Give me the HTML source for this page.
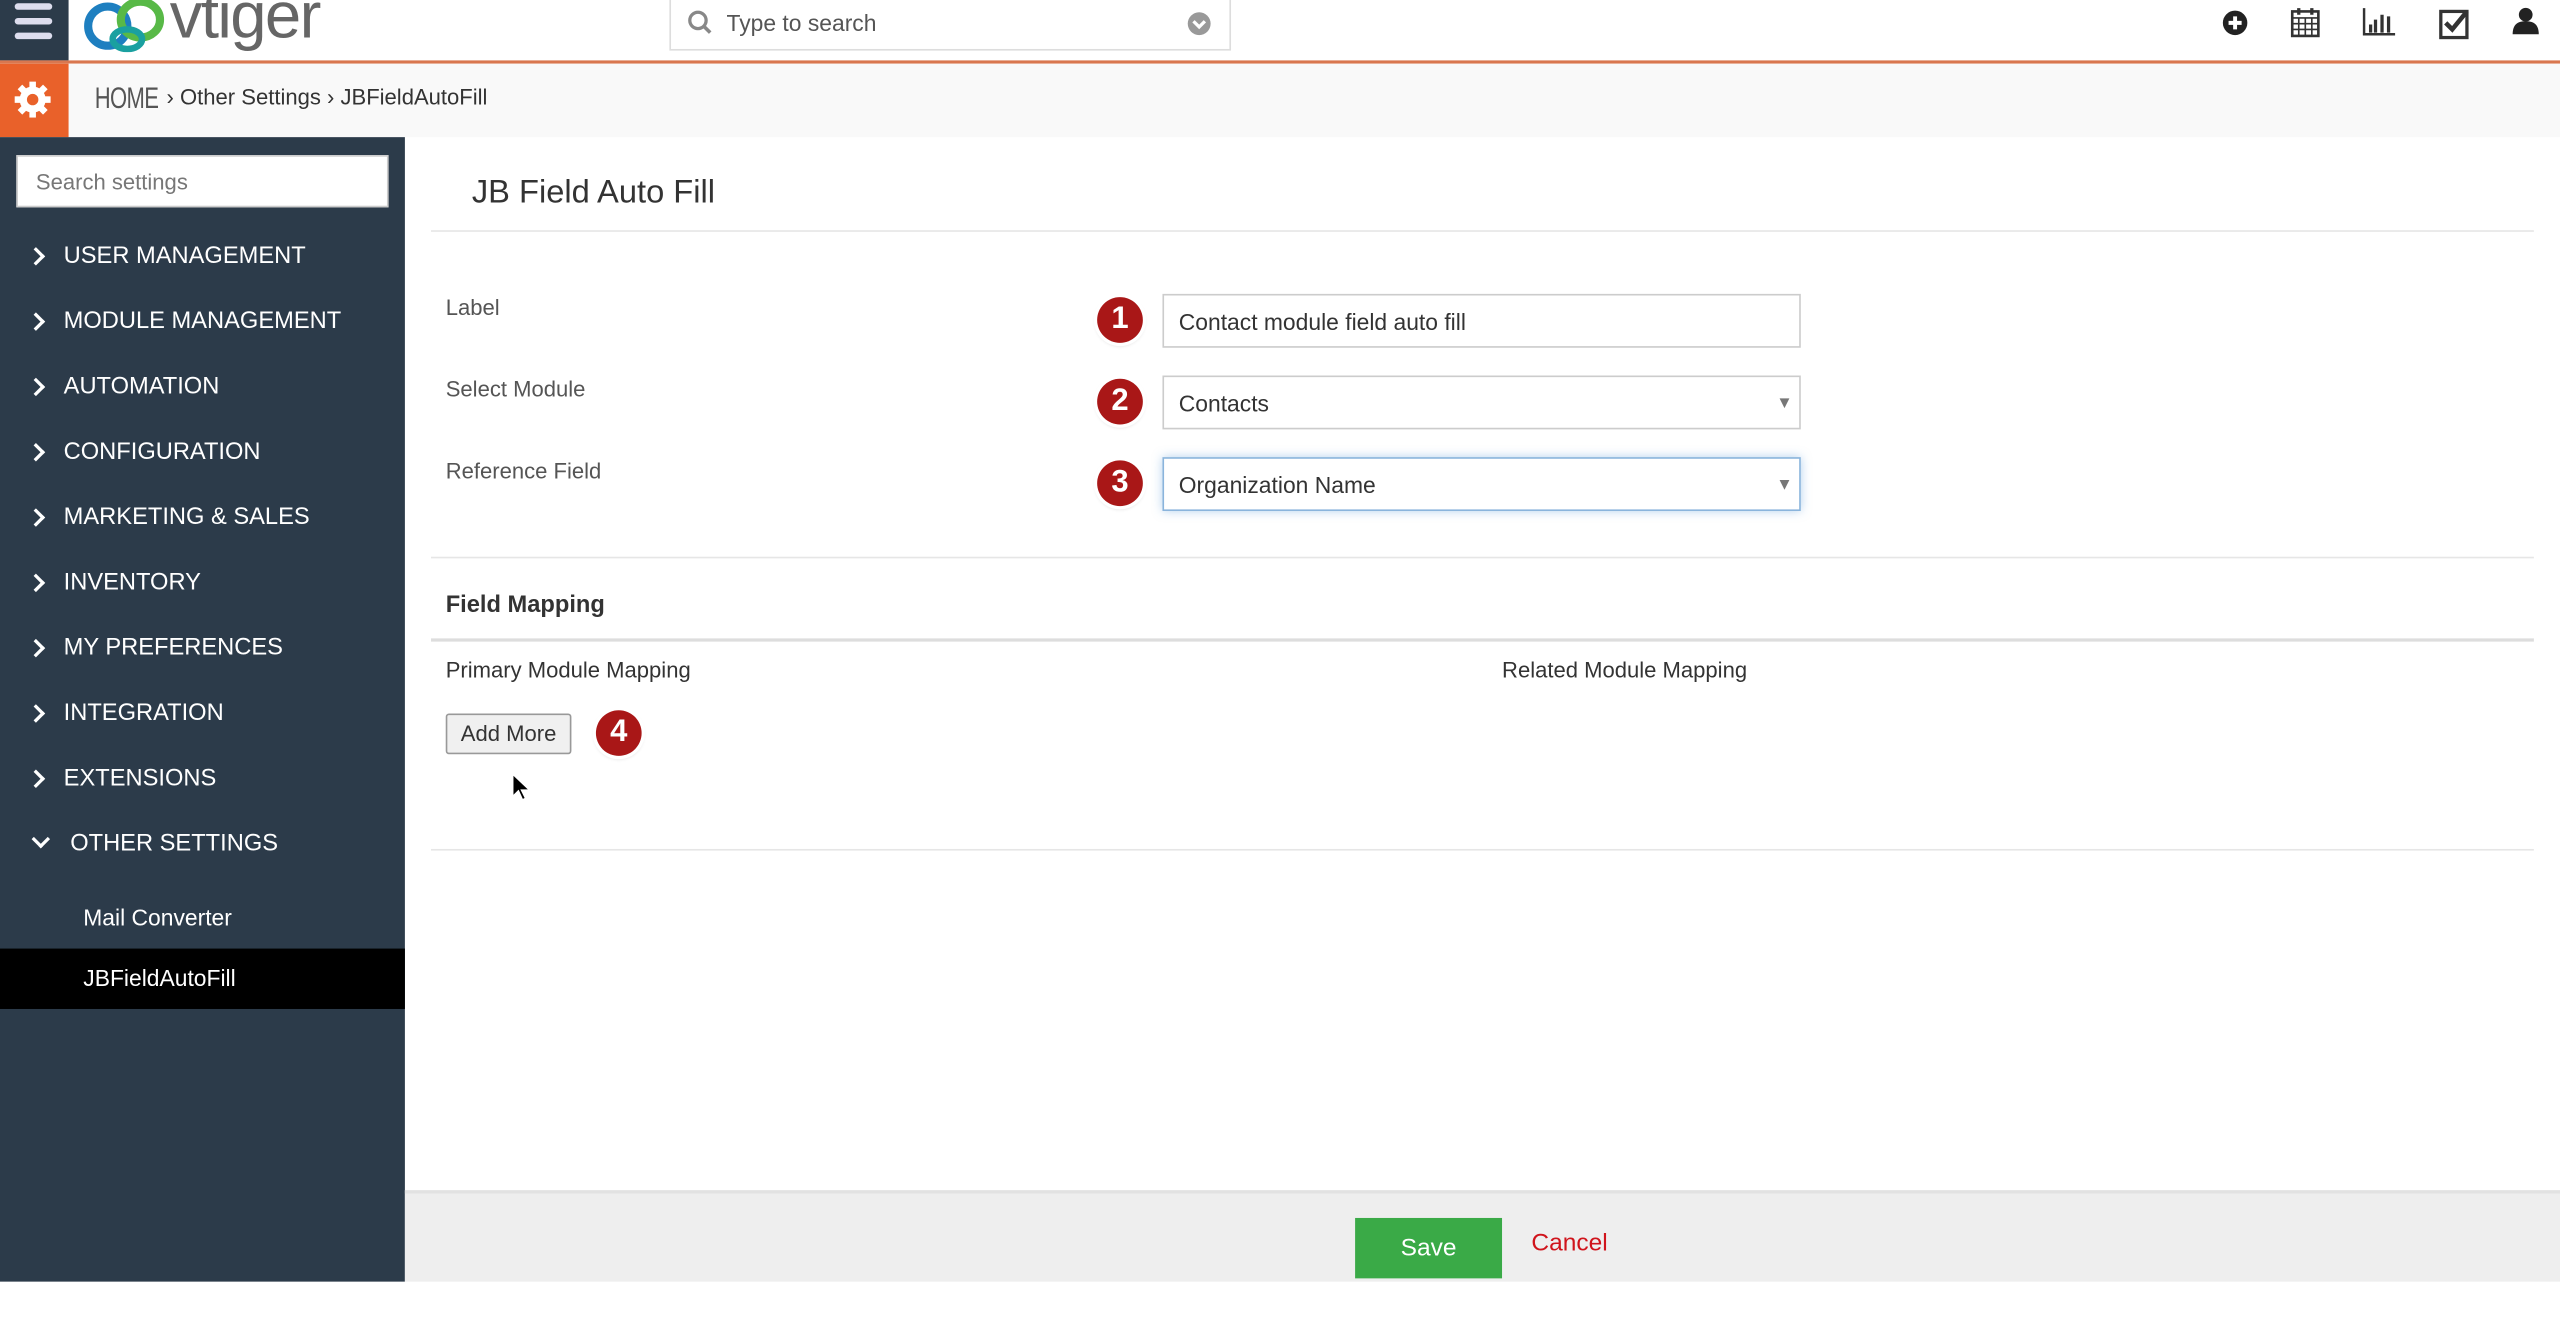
<!DOCTYPE html>
<html><head><meta charset="utf-8"><style>
*{box-sizing:border-box;margin:0;padding:0}
html,body{width:2560px;height:1328px;overflow:hidden;background:#fff}
#w{width:1568px;height:814px;transform:scale(1.63265);transform-origin:0 0;position:relative;font-family:"Liberation Sans",sans-serif;color:#333}
.a{position:absolute}
.menu{position:absolute;left:39px;color:#fff;font-size:14.5px;letter-spacing:0}
.chev{position:absolute;left:18px;width:8px;height:8px;border-right:2.5px solid #fff;border-top:2.5px solid #fff;transform:rotate(45deg)}
.lbl{position:absolute;left:273px;font-size:13.5px;color:#555}
.inp{position:absolute;left:712px;width:391px;height:33px;border:1px solid #ccc;background:#fff;font-size:14px;color:#333;padding:8px 9px}
.num{position:absolute;width:28px;height:28px;border-radius:50%;background:#a91717;color:#fff;font-weight:bold;font-size:19px;text-align:center;line-height:28px;box-shadow:0 0 0 2px #fff,0 1px 3px rgba(0,0,0,.3)}
.arr{position:absolute;right:6px;top:13px;border-left:3px solid transparent;border-right:3px solid transparent;border-top:6px solid #777}
.hr{position:absolute;left:264px;width:1288px;height:1px;background:#e6e6e6}
</style></head><body><div id="w">
<!-- top bar -->
<div class="a" style="left:0;top:0;width:42px;height:37px;background:#2c3b4a"></div>
<div class="a" style="left:9px;top:2px;width:23px;height:4px;background:#dde;border-radius:2px"></div>
<div class="a" style="left:9px;top:11px;width:23px;height:4px;background:#dde;border-radius:2px"></div>
<div class="a" style="left:9px;top:20px;width:23px;height:4px;background:#dde;border-radius:2px"></div>
<svg class="a" style="left:50px;top:0" width="60" height="32" viewBox="0 0 60 32"><ellipse cx="16" cy="16" rx="12" ry="12" fill="none" stroke="#1e7fc0" stroke-width="5"/><ellipse cx="36" cy="12" rx="12" ry="11" fill="none" stroke="#58b947" stroke-width="5"/><ellipse cx="28" cy="24" rx="9" ry="6" fill="none" stroke="#1aa0a0" stroke-width="4"/></svg>
<div class="a" style="left:104px;top:-12px;font-size:40px;color:#666;letter-spacing:-1px">vtiger</div>
<div class="a" style="left:410px;top:-2px;width:344px;height:33px;border:1px solid #ddd;background:#fff"></div>
<svg class="a" style="left:421px;top:6px" width="16" height="16" viewBox="0 0 16 16"><circle cx="6.5" cy="6.5" r="5" fill="none" stroke="#888" stroke-width="2"/><path d="M10 10l4 4" stroke="#888" stroke-width="2.2"/></svg>
<div class="a" style="left:445px;top:6px;font-size:14px;color:#555">Type to search</div>
<svg class="a" style="left:727px;top:7px" width="15" height="15" viewBox="0 0 15 15"><circle cx="7.5" cy="7.5" r="7" fill="#999"/><path d="M4 6l3.5 3.5L11 6" stroke="#fff" stroke-width="2" fill="none"/></svg>
<svg class="a" style="left:1360px;top:5px" width="18" height="18" viewBox="0 0 18 18"><circle cx="9" cy="9" r="7.5" fill="#222"/><path d="M9 5v8M5 9h8" stroke="#fff" stroke-width="2.4"/></svg>
<svg class="a" style="left:1402px;top:3px" width="20" height="20" viewBox="0 0 20 20"><rect x="2" y="4" width="16" height="15" fill="none" stroke="#333" stroke-width="1.6"/><path d="M2 8h16M2 11.5h16M2 15h16M6 8v11M10 8v11M14 8v11" stroke="#333" stroke-width="1"/><path d="M6 2v4M14 2v4" stroke="#333" stroke-width="2"/></svg>
<svg class="a" style="left:1446px;top:3px" width="22" height="20" viewBox="0 0 22 20"><path d="M2 2v16h19" stroke="#333" stroke-width="1.5" fill="none"/><path d="M6 12v5M9 9v8M13 6v11M17 7v10" stroke="#333" stroke-width="2"/></svg>
<svg class="a" style="left:1493px;top:3px" width="22" height="22" viewBox="0 0 22 22"><rect x="2" y="4" width="16" height="16" fill="none" stroke="#333" stroke-width="2"/><path d="M5 11l4 4 9-11" stroke="#333" stroke-width="2.8" fill="none"/></svg>
<svg class="a" style="left:1538px;top:4px" width="18" height="18" viewBox="0 0 18 18"><circle cx="9" cy="5" r="4.2" fill="#222"/><path d="M1 17c0-6 3-8 8-8s8 2 8 8z" fill="#222"/></svg>
<div class="a" style="left:0;top:37px;width:1568px;height:1.5px;background:#d9774f"></div>
<!-- second row -->
<div class="a" style="left:0;top:38.5px;width:1568px;height:45.5px;background:#f9f9f9"></div>
<div class="a" style="left:0;top:38.5px;width:42px;height:45.5px;background:#e9612a"></div>
<svg class="a" style="left:8px;top:49px" width="24" height="24" viewBox="0 0 24 24"><g fill="#fff"><circle cx="12" cy="12" r="8"/><rect x="10" y="1" width="4" height="22"/><rect x="1" y="10" width="22" height="4"/><rect x="10" y="1" width="4" height="22" transform="rotate(45 12 12)"/><rect x="10" y="1" width="4" height="22" transform="rotate(-45 12 12)"/></g><circle cx="12" cy="12" r="3.5" fill="#e9612a"/></svg>
<div class="a" style="left:58px;top:50px;font-size:18px;color:#555;transform:scaleX(.75);transform-origin:0 0;letter-spacing:-0.5px">HOME</div>
<div class="a" style="left:102px;top:52px;font-size:13.5px;color:#333">› Other Settings › JBFieldAutoFill</div>
<!-- sidebar -->
<div class="a" style="left:0;top:84px;width:248px;height:701px;background:#2c3b4a"></div>
<div class="a" style="left:10px;top:95px;width:228px;height:32px;background:#fff;border:1px solid #ccc;font-size:13.5px;color:#777;padding:8px 11px">Search settings</div>
<div class="chev" style="top:153px"></div><div class="menu" style="top:149px">USER MANAGEMENT</div>
<div class="chev" style="top:193px"></div><div class="menu" style="top:189px">MODULE MANAGEMENT</div>
<div class="chev" style="top:233px"></div><div class="menu" style="top:229px">AUTOMATION</div>
<div class="chev" style="top:273px"></div><div class="menu" style="top:269px">CONFIGURATION</div>
<div class="chev" style="top:313px"></div><div class="menu" style="top:309px">MARKETING &amp; SALES</div>
<div class="chev" style="top:353px"></div><div class="menu" style="top:349px">INVENTORY</div>
<div class="chev" style="top:393px"></div><div class="menu" style="top:389px">MY PREFERENCES</div>
<div class="chev" style="top:433px"></div><div class="menu" style="top:429px">INTEGRATION</div>
<div class="chev" style="top:473px"></div><div class="menu" style="top:469px">EXTENSIONS</div>
<div class="chev" style="left:21px;top:510px;transform:rotate(135deg)"></div><div class="menu" style="left:43px;top:509px">OTHER SETTINGS</div>
<div class="menu" style="left:51px;top:554px;font-size:14px">Mail Converter</div>
<div class="a" style="left:0;top:581px;width:248px;height:37px;background:#000"></div>
<div class="menu" style="left:51px;top:591px;font-size:14px">JBFieldAutoFill</div>
<!-- main -->
<div class="a" style="left:289px;top:107px;font-size:20px;color:#333">JB Field Auto Fill</div>
<div class="hr" style="top:141px"></div>
<div class="lbl" style="top:181px">Label</div>
<div class="lbl" style="top:231px">Select Module</div>
<div class="lbl" style="top:281px">Reference Field</div>
<div class="num" style="left:672px;top:182px">1</div>
<div class="num" style="left:672px;top:232px">2</div>
<div class="num" style="left:672px;top:282px">3</div>
<div class="inp" style="top:180px">Contact module field auto fill</div>
<div class="inp" style="top:230px">Contacts<div class="arr"></div></div>
<div class="inp" style="top:280px;border-color:#8ab4dc;box-shadow:0 0 6px rgba(100,160,220,.5)">Organization Name<div class="arr"></div></div>
<div class="hr" style="top:341px"></div>
<div class="a" style="left:273px;top:363px;font-size:14.5px;font-weight:bold;color:#333">Field Mapping</div>
<div class="hr" style="top:391px;height:2px;background:#ddd"></div>
<div class="a" style="left:273px;top:403px;font-size:13.5px">Primary Module Mapping</div>
<div class="a" style="left:920px;top:403px;font-size:13.5px">Related Module Mapping</div>
<div class="a" style="left:273px;top:437px;width:77px;height:25px;border:1px solid #999;background:#f0f0f0;font-size:13.5px;text-align:center;line-height:23px;border-radius:2px">Add More</div>
<div class="num" style="left:365px;top:435px">4</div>
<svg class="a" style="left:313px;top:473px" width="12" height="18" viewBox="0 0 12 18"><path d="M1 1v14l3.5-3.5 2.5 5.5 2-1-2.5-5h5z" fill="#000" stroke="#fff" stroke-width="1"/></svg>
<div class="hr" style="top:520px"></div>
<!-- footer -->
<div class="a" style="left:248px;top:729px;width:1320px;height:56px;background:#eee;border-top:2px solid #e2e2e2"></div>
<div class="a" style="left:830px;top:746px;width:90px;height:37px;background:#3aaa47;color:#fff;font-size:15px;text-align:center;line-height:37px">Save</div>
<div class="a" style="left:938px;top:753px;font-size:15px;color:#d0141c">Cancel</div>
</div></body></html>
